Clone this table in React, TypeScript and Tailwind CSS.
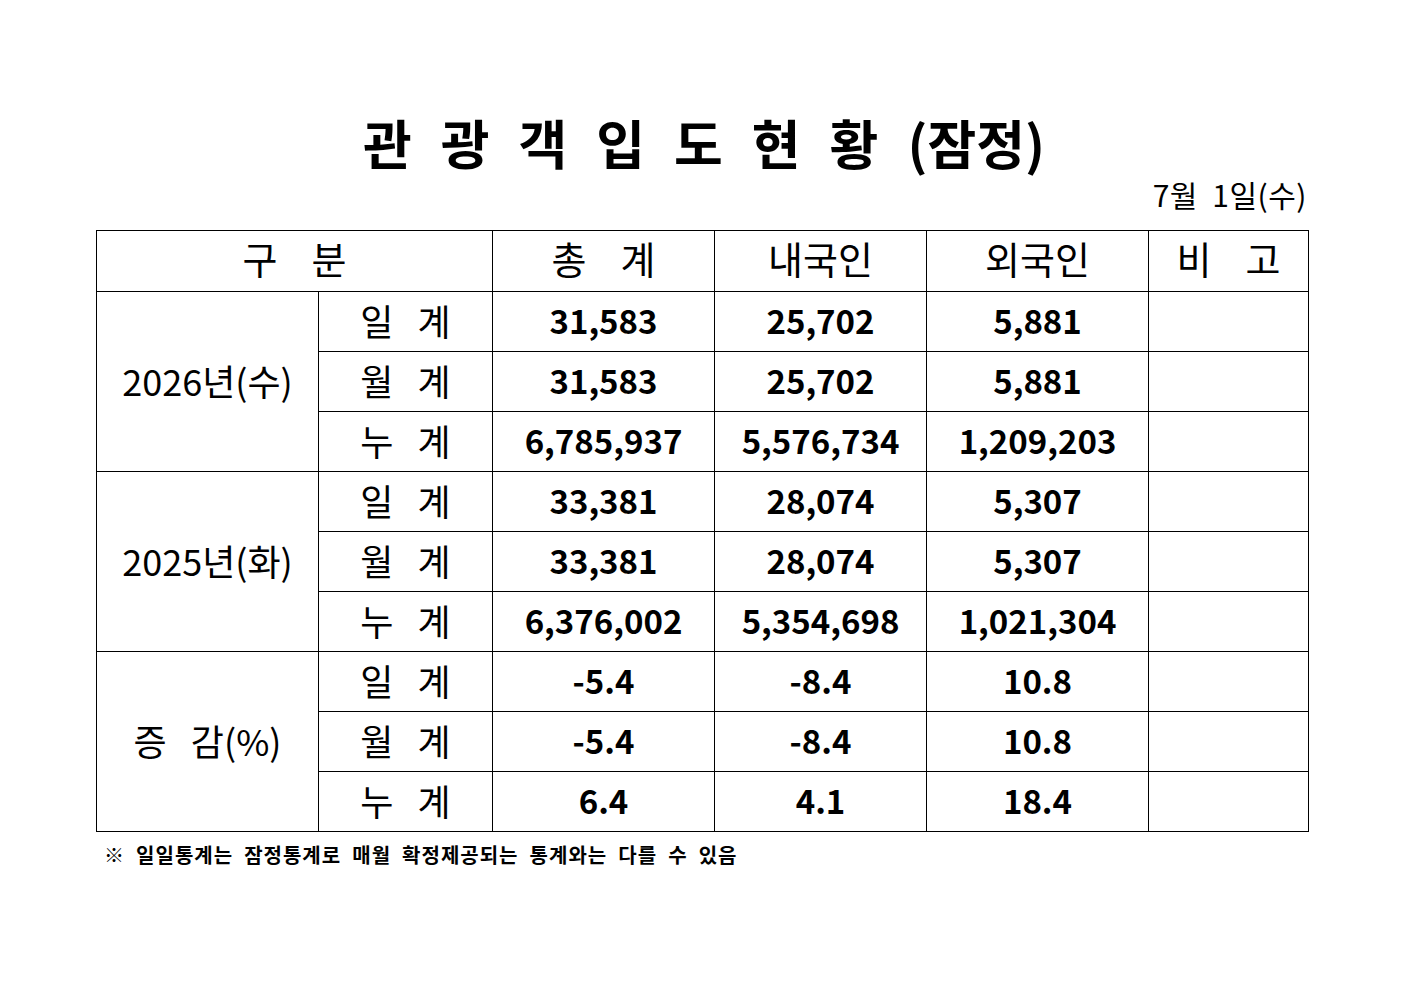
const rows = [
  { group: "2026년(수)", label: "일 계", total: "31,583", dom: "25,702", intl: "5,881" },
  { group: "", label: "월 계", total: "31,583", dom: "25,702", intl: "5,881" },
  { group: "", label: "누 계", total: "6,785,937", dom: "5,576,734", intl: "1,209,203" },
  { group: "2025년(화)", label: "일 계", total: "33,381", dom: "28,074", intl: "5,307" },
  { group: "", label: "월 계", total: "33,381", dom: "28,074", intl: "5,307" },
  { group: "", label: "누 계", total: "6,376,002", dom: "5,354,698", intl: "1,021,304" },
  { group: "증   감(%)", label: "일 계", total: "-5.4", dom: "-8.4", intl: "10.8" },
  { group: "", label: "월 계", total: "-5.4", dom: "-8.4", intl: "10.8" },
  { group: "", label: "누 계", total: "6.4", dom: "4.1", intl: "18.4" },
];

const titleChars = ["관", "광", "객", "입", "도", "현", "황", "(잠정)"];

export default function App() {
  return (
    <div className="min-h-[992px] w-[1403px] bg-white text-black font-['Noto_Sans_CJK_KR','Noto_Sans',sans-serif]">
      <div className="ml-[96px] w-[1212px] pt-[110px]">
        <h1 className="flex justify-center gap-[29px] pl-[4px] text-[53px] leading-[64px] font-bold">
          {titleChars.map((c) => (
            <span key={c}>{c}</span>
          ))}
        </h1>
        <div className="mt-[2px] pr-[1px] text-right text-[30px] leading-[36px] tracking-[0.5px] whitespace-pre">
          7월  1일(수)
        </div>
        <table className="mt-[18px] w-full table-fixed border-collapse border border-black">
          <colgroup>
            <col className="w-[222px]" />
            <col className="w-[174px]" />
            <col className="w-[222px]" />
            <col className="w-[212px]" />
            <col className="w-[222px]" />
            <col className="w-[160px]" />
          </colgroup>
          <thead>
            <tr className="h-[61px] text-[38px] leading-[48px]">
              <th colSpan={2} className="border border-black pb-[6px] font-normal whitespace-pre">
                구    분
              </th>
              <th className="border border-black pb-[6px] font-normal whitespace-pre">총    계</th>
              <th className="border border-black pb-[6px] font-normal">내국인</th>
              <th className="border border-black pb-[6px] font-normal">외국인</th>
              <th className="border border-black pb-[6px] font-normal whitespace-pre">비    고</th>
            </tr>
          </thead>
          <tbody>
            {rows.map((r, i) => (
              <tr key={i} className="h-[60px] leading-[48px]">
                {i % 3 === 0 && (
                  <td
                    rowSpan={3}
                    className="border border-black pb-[4px] text-center text-[36px] whitespace-pre"
                  >
                    {r.group}
                  </td>
                )}
                <td className="border border-black pb-[4px] text-center text-[36px] whitespace-pre">
                  {r.label.replace(" ", "   ")}
                </td>
                <td className="border border-black pb-[3px] text-center text-[33px] font-bold">{r.total}</td>
                <td className="border border-black pb-[3px] text-center text-[33px] font-bold">{r.dom}</td>
                <td className="border border-black pb-[3px] text-center text-[33px] font-bold">{r.intl}</td>
                <td className="border border-black" />
              </tr>
            ))}
          </tbody>
        </table>
        <p className="mt-[10px] pl-[8px] text-[20px] leading-[26px] tracking-[1px] font-bold whitespace-pre">
          ※  일일통계는  잠정통계로  매월  확정제공되는  통계와는  다를  수  있음
        </p>
      </div>
    </div>
  );
}
